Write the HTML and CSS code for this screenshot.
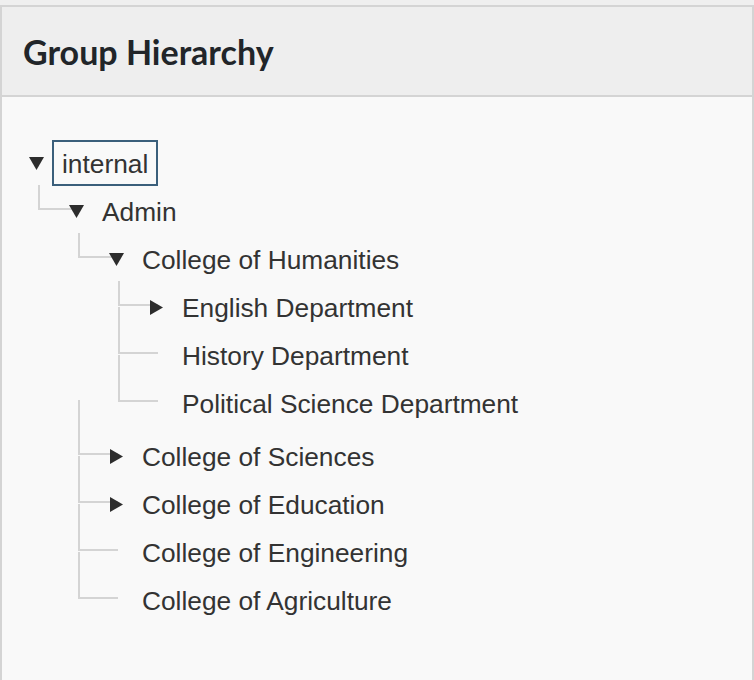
FILE: index.html
```html
<!DOCTYPE html>
<html>
<head>
<meta charset="utf-8">
<link rel="stylesheet" href="styles.css">
</head>
<body>
<div class="panel">
  <div class="panel-header"><h1 class="title">Group Hierarchy</h1></div>
  <div class="panel-body">
    <ul class="tree">
      <li>
        <div class="row"><span class="toggle"><svg class="tri-down" viewBox="0 0 15 13"><polygon points="0,0 15,0 7.5,13"/></svg></span><span class="label selected">internal</span></div>
        <ul>
          <li>
            <div class="row"><span class="toggle"><svg class="tri-down" viewBox="0 0 15 13"><polygon points="0,0 15,0 7.5,13"/></svg></span><span class="label">Admin</span></div>
            <ul>
              <li>
                <div class="row"><span class="toggle"><svg class="tri-down" viewBox="0 0 15 13"><polygon points="0,0 15,0 7.5,13"/></svg></span><span class="label">College of Humanities</span></div>
                <ul>
                  <li>
                    <div class="row"><span class="toggle"><svg class="tri-right" viewBox="0 0 13 15"><polygon points="0,0 13,7.5 0,15"/></svg></span><span class="label">English Department</span></div>
                  </li>
                  <li>
                    <div class="row"><span class="toggle"></span><span class="label">History Department</span></div>
                  </li>
                  <li>
                    <div class="row"><span class="toggle"></span><span class="label">Political Science Department</span></div>
                  </li>
                </ul>
              </li>
              <li class="after-open">
                <div class="row"><span class="toggle"><svg class="tri-right" viewBox="0 0 13 15"><polygon points="0,0 13,7.5 0,15"/></svg></span><span class="label">College of Sciences</span></div>
              </li>
              <li>
                <div class="row"><span class="toggle"><svg class="tri-right" viewBox="0 0 13 15"><polygon points="0,0 13,7.5 0,15"/></svg></span><span class="label">College of Education</span></div>
              </li>
              <li>
                <div class="row"><span class="toggle"></span><span class="label">College of Engineering</span></div>
              </li>
              <li>
                <div class="row"><span class="toggle"></span><span class="label">College of Agriculture</span></div>
              </li>
            </ul>
          </li>
        </ul>
      </li>
    </ul>
  </div>
</div>
</body>
</html>
```
FILE: styles.css
```css
html, body {
  margin: 0;
  padding: 0;
  background: #efefef;
}
body {
  padding-top: 5px;
  font-family: "Liberation Sans", Arial, sans-serif;
}
.panel {
  border: 2px solid #d4d4d4;
  height: 720px;
  background: #f9f9f9;
  box-sizing: border-box;
}
.panel-header {
  height: 90px;
  box-sizing: border-box;
  background: #eeeeee;
  border-bottom: 2px solid #d4d4d4;
  display: flex;
  align-items: center;
  padding-left: 21px;
}
.title {
  margin: 0;
  font-family: Lato, "Liberation Sans", sans-serif;
  font-weight: 700;
  font-size: 34px;
  color: #212529;
}
.panel-body {
  padding: 43px 0 0 27px;
}
.tree, .tree ul {
  list-style: none;
  margin: 0;
  padding: 0;
}
.tree ul {
  padding-left: 40px;
  margin-bottom: 5px;
}
.tree li {
  position: relative;
}
.tree ul li::before {
  content: "";
  position: absolute;
  left: -31px;
  width: 40px;
  top: -25px;
  height: 47px;
  box-sizing: border-box;
  border-left: 2px solid #d4d4d4;
  border-bottom: 2px solid #d4d4d4;
}
.tree ul li:first-child::before {
  top: -3px;
  height: 25px;
}
.tree ul li.after-open::before {
  top: -33px;
  height: 55px;
}
.row {
  position: relative;
  display: flex;
  align-items: flex-start;
  height: 48px;
  color: #333333;
  font-size: 26.3px;
}
.toggle {
  width: 16px;
  height: 46px;
  margin-right: 7px;
  display: flex;
  align-items: center;
  flex: none;
}
.tri-down {
  width: 15px;
  height: 13px;
  fill: #2d2d2d;
}
.tri-right {
  width: 13px;
  height: 15px;
  margin-left: 1px;
  fill: #2d2d2d;
}
.label {
  height: 46px;
  box-sizing: border-box;
  border: 2px solid transparent;
  padding: 0 8px;
  line-height: 44px;
  white-space: nowrap;
}
.label.selected {
  border-color: #3b5f7b;
}
```
